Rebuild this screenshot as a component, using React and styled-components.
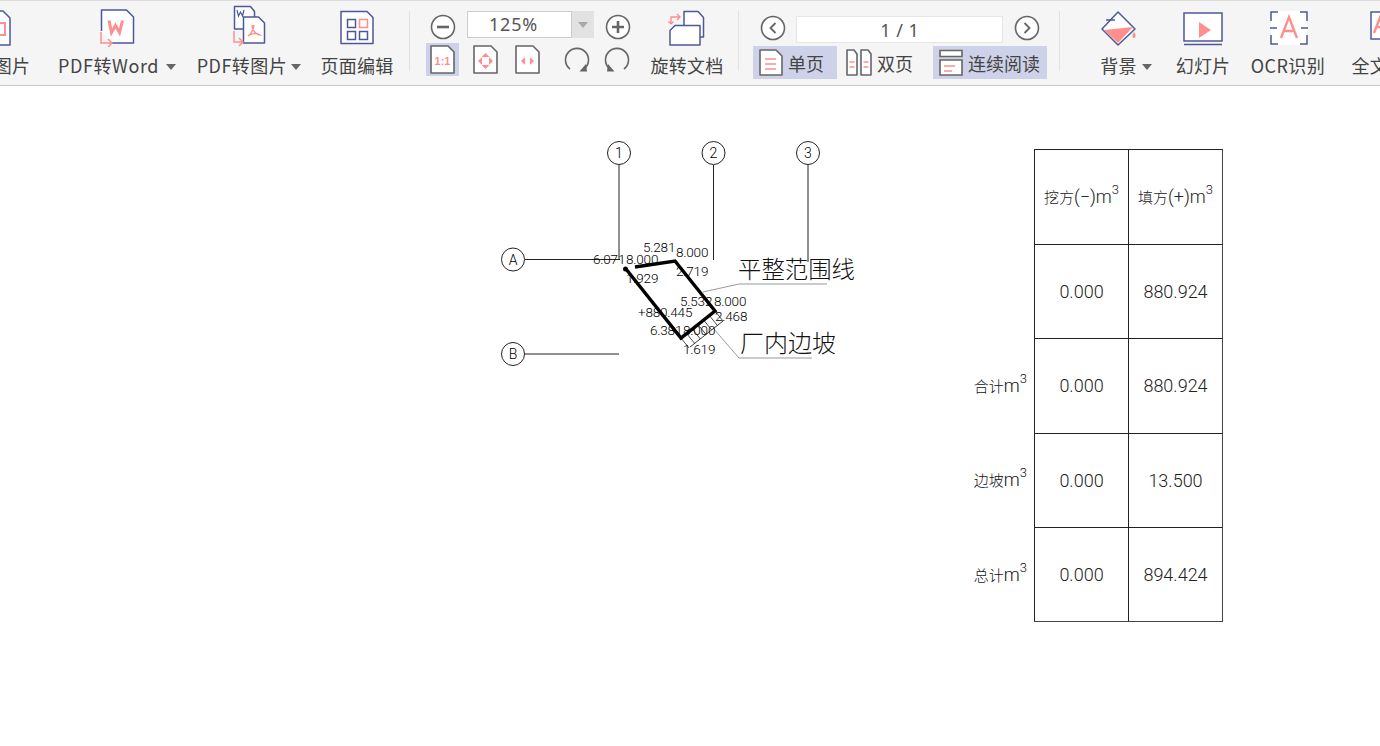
import React from "react";
import styled, { createGlobalStyle } from "styled-components";

const NAVY = "#4d5799";
const PINK = "#ff8f8f";
const GREY = "#666";
const UI_FONT = '"Noto Sans CJK SC", "Noto Sans", sans-serif';
const CAD_FONT = 'Roboto, "Liberation Sans", sans-serif';

const GlobalStyle = createGlobalStyle`
  html, body { margin: 0; padding: 0; background: #fff; overflow: hidden; }
  body { font-family: ${UI_FONT}; }
`;

const Page = styled.div`
  width: 1380px;
  height: 746px;
  overflow: hidden;
  display: flex;
  flex-direction: column;
`;

const Toolbar = styled.div`
  height: 85px;
  flex: none;
  box-sizing: border-box;
  display: flex;
  align-items: flex-start;
  margin-left: -24px;
  background: #f5f5f5;
  border-top: 1px solid #dcdcdc;
  overflow: hidden;
`;

const Tool = styled.div`
  width: ${p => p.$w}px;
  margin-left: ${p => p.$ml || 0}px;
  flex: none;
  display: flex;
  flex-direction: column;
  align-items: center;
  padding-top: 2px;
`;

const Label = styled.div`
  margin-top: 6px;
  height: 24px;
  line-height: 24px;
  font-size: 18px;
  letter-spacing: ${p => p.$track || 0.2}px;
  color: #444;
  white-space: nowrap;
  display: flex;
  align-items: center;
`;

const Caret = styled.span`
  width: 0;
  height: 0;
  margin-left: ${p => p.$gap || 7}px;
  margin-top: 3px;
  border-left: 5px solid transparent;
  border-right: 5px solid transparent;
  border-top: 6px solid #666;
`;

const Divider = styled.div`
  width: 1px;
  height: 60px;
  flex: none;
  margin: 10px ${p => p.$right}px 0 ${p => p.$left}px;
  background: #e2e2e2;
`;

const Group = styled.div`
  width: ${p => p.$w}px;
  flex: none;
  display: flex;
  flex-direction: column;
`;

const ZoomTop = styled.div`
  display: flex;
  align-items: center;
  height: 27px;
  margin-top: 10px;
  padding-left: 4px;
`;

const ZoomBottom = styled.div`
  display: flex;
  align-items: center;
  margin-top: 5px;
`;

const RoundIcon = styled.svg`
  width: 26px;
  height: 26px;
  flex: none;
  margin-left: ${p => p.$ml || 0}px;
  margin-top: ${p => p.$down || 0}px;
  margin-bottom: ${p => p.$up || 0}px;
  transform: ${p => (p.$flip ? "scaleX(-1)" : "none")};
`;

const ZoomField = styled.div`
  width: 105px;
  height: 27px;
  margin-left: 11px;
  padding-right: 12px;
  box-sizing: border-box;
  background: #fff;
  border: 1px solid #ccc;
  font-family: "Noto Sans", sans-serif;
  font-size: 18px;
  line-height: 25px;
  letter-spacing: 0.8px;
  text-align: center;
  color: #555;
`;

const ZoomDrop = styled.div`
  width: 22px;
  height: 27px;
  flex: none;
  display: flex;
  align-items: center;
  justify-content: center;
  background: #e2e2e2;
`;

const DropCaret = styled.span`
  width: 0;
  height: 0;
  border-left: 5px solid transparent;
  border-right: 5px solid transparent;
  border-top: 6px solid #a8a8a8;
`;

const FitButton = styled.div`
  width: 33px;
  height: 33px;
  flex: none;
  margin-left: ${p => p.$ml || 0}px;
  display: flex;
  align-items: center;
  justify-content: center;
  background: ${p => (p.$active ? "#ced2e8" : "transparent")};
`;

const NavTop = styled.div`
  display: flex;
  align-items: center;
  height: 27px;
  margin-top: 15px;
  padding-left: 7px;
`;

const PageField = styled.div`
  width: 207px;
  height: 27px;
  margin-left: 10px;
  box-sizing: border-box;
  background: #fff;
  border: 1px solid #e6e6e6;
  font-family: "Noto Sans", sans-serif;
  font-size: 18px;
  line-height: 26px;
  text-align: center;
  word-spacing: 1px;
  color: #555;
`;

const NavBottom = styled.div`
  display: flex;
  margin-top: 3px;
`;

const ViewButton = styled.div`
  width: ${p => p.$w}px;
  height: 33px;
  flex: none;
  margin-left: ${p => p.$ml || 0}px;
  display: flex;
  align-items: center;
  padding-left: ${p => (p.$tight ? 1 : 6)}px;
  box-sizing: border-box;
  gap: 5px;
  font-size: 18px;
  color: #444;
  white-space: nowrap;
  background: ${p => (p.$active ? "#ced2e8" : "transparent")};
`;

const Sheet = styled.div`
  flex: 1;
  display: flex;
  align-items: flex-start;
  background: #fff;
  border-top: 1px solid #c8c8c8;
`;

const Drawing = styled.svg`
  width: 380px;
  height: 300px;
  flex: none;
  margin: 49px 0 0 495px;
`;

const Dim = styled.text`
  font-family: ${CAD_FONT};
  font-size: 13.5px;
  letter-spacing: -0.2px;
  font-weight: 300;
  fill: #000;
`;

const Bubble = styled.text`
  font-family: ${CAD_FONT};
  font-size: 14px;
  font-weight: 300;
  fill: #000;
  text-anchor: middle;
`;

const Callout = styled.text`
  font-family: "Noto Sans CJK SC", sans-serif;
  font-size: ${p => p.$size}px;
  font-weight: 300;
  fill: #111;
`;

const Takeoff = styled.div`
  margin: 63px 0 0 100px;
  display: grid;
  grid-template-columns: 59px 94px 95px;
  grid-template-rows: repeat(5, 94.5px);
`;

const RowName = styled.div`
  display: flex;
  align-items: center;
  justify-content: flex-end;
  padding-right: 7px;
  font-family: "Noto Sans CJK SC", sans-serif;
  font-weight: 300;
  font-size: 15px;
  color: #111;
  white-space: nowrap;
`;

const Cell = styled.div`
  display: flex;
  align-items: center;
  justify-content: center;
  box-sizing: border-box;
  border-top: 1px solid #222;
  border-left: 1px solid #222;
  border-right: ${p => (p.$end ? "1px solid #444" : "none")};
  border-bottom: ${p => (p.$last ? "1px solid #444" : "none")};
  font-family: ${p => (p.$head ? '"Noto Sans CJK SC", sans-serif' : CAD_FONT)};
  font-size: ${p => (p.$head ? 15 : 18)}px;
  font-weight: 300;
  color: #222;
  white-space: nowrap;
`;

const Cube = styled.sup`
  font-size: 13px;
  line-height: 0;
  vertical-align: 9px;
`;

const Metric = styled.span`
  font-family: ${CAD_FONT};
  font-weight: 300;
  font-size: 18px;
`;

const Unit = () => <Metric>m<Cube>3</Cube></Metric>;

// 所有图标都按截图上的屏幕坐标画，viewBox 取工具中心左右各 30
const ToolIcon = ({ cx, children }) => (
  <svg width="60" height="44" viewBox={`${cx - 30} 4 60 44`} fill="none">
    {children}
  </svg>
);

const Sheetlet = ({ d, stroke = NAVY }) => (
  <path d={d} fill="#fff" stroke={stroke} strokeWidth="1.5" strokeLinejoin="round" />
);

const BackArrow = ({ x, y, to }) => (
  <path d={`M${x} ${y}v11h${to - x}m-4 -4l4 4l-4 4`} stroke={PINK} strokeWidth="1.5" />
);

const CirclePlain = ({ children, ml, down, up }) => (
  <RoundIcon viewBox="0 0 26 26" fill="none" $ml={ml} $down={down} $up={up}>
    <circle cx="13" cy="13" r="11.5" fill="#fff" stroke={GREY} strokeWidth="1.6" />
    {children}
  </RoundIcon>
);

const MiniPage = ({ children }) => (
  <svg width="25" height="29" viewBox="0 0 25 29" fill="none">
    <path d="M1 1h17l6 6v21H1z" fill="#fff" stroke={GREY} strokeWidth="1.6" strokeLinejoin="round" />
    {children}
  </svg>
);

const Spin = ({ flip, ml }) => (
  <RoundIcon viewBox="0 0 26 26" fill="none" $ml={ml} $flip={flip}>
    <path d="M6 22A11.5 11.5 0 1 1 20 22" stroke={GREY} strokeWidth="1.6" />
    <path d="M15.500 24.500h7.500l-1-7.500z" fill={GREY} />
  </RoundIcon>
);

const SinglePageIcon = () => (
  <svg width="24" height="27" viewBox="0 0 24 27" fill="none">
    <path d="M1 1h16l6 6v19H1z" fill="#fff" stroke={GREY} strokeWidth="1.6" strokeLinejoin="round" />
    <path d="M6 10h11M6 15h11M6 20h11" stroke={PINK} strokeWidth="1.6" />
  </svg>
);

const TwoPageIcon = () => (
  <svg width="26" height="27" viewBox="0 0 26 27" fill="none">
    <path d="M1 1h7l3 4v21H1zM15 1h7l3 4v21H15z" fill="#fff" stroke={GREY} strokeWidth="1.6" strokeLinejoin="round" />
    <path d="M3.500 13h5M3.500 18h5M17.500 13h5M17.500 18h5" stroke={PINK} strokeWidth="1.6" />
  </svg>
);

const ScrollIcon = () => (
  <svg width="24" height="27" viewBox="0 0 24 27" fill="none">
    <path d="M1 1.500h22v6H1z" fill="#fff" stroke={GREY} strokeWidth="1.6" />
    <path d="M1 11h22v15H1z" fill="#fff" stroke={GREY} strokeWidth="1.6" />
    <path d="M5 17h11M5 22h8" stroke={PINK} strokeWidth="1.6" />
  </svg>
);

const BUBBLES = [
  { cx: 619, cy: 153, t: "1" },
  { cx: 713.5, cy: 153, t: "2" },
  { cx: 808, cy: 153, t: "3" },
  { cx: 513, cy: 259.5, t: "A" },
  { cx: 513, cy: 354, t: "B" },
];

const DIMS = [
  { x: 593, y: 264, t: "6.071" },
  { x: 626, y: 264, t: "8.000" },
  { x: 643, y: 252, t: "5.281" },
  { x: 676, y: 257, t: "8.000" },
  { x: 676, y: 276, t: "2.719" },
  { x: 626, y: 283, t: "1.929" },
  { x: 680, y: 306, t: "5.532" },
  { x: 714, y: 306, t: "8.000" },
  { x: 638, y: 317, t: "+880.445" },
  { x: 715, y: 321, t: "2.468" },
  { x: 650, y: 335, t: "6.381" },
  { x: 683, y: 335, t: "8.000" },
  { x: 683, y: 354, t: "1.619" },
];

// 边坡示坡线：沿右下边每隔一段画一根
const HATCH = [0, 1, 2, 3, 4, 5, 6].map(i => {
  const x = 681 + i * 5.67;
  const y = 338 - i * 4.5;
  return `M${x} ${y}l8 10`;
});

const ROWS = [
  { name: "", cut: "0.000", fill: "880.924" },
  { name: "合计", cut: "0.000", fill: "880.924" },
  { name: "边坡", cut: "0.000", fill: "13.500" },
  { name: "总计", cut: "0.000", fill: "894.424" },
];

export default function App() {
  return (
    <Page>
      <GlobalStyle />
      <Toolbar>
        <Tool $w={72}>
          <ToolIcon cx={12}>
            <Sheetlet d="M-30 12h33l7 7v27h-40z" />
            <path d="M-8 24h13v12H-8z" fill="#fff" stroke={PINK} strokeWidth="2" />
          </ToolIcon>
          <Label>图片</Label>
        </Tool>
        <Tool $w={138}>
          <ToolIcon cx={117}>
            <Sheetlet d="M101.500 32V11h25l7 7v26h-23" />
            <BackArrow x={101} y={33} to={112} />
            <path d="M109 21.500l2.500 12 4-7 4 7 3-12" stroke={PINK} strokeWidth="3" />
          </ToolIcon>
          <Label $track={0.6}>PDF转Word<Caret /></Label>
        </Tool>
        <Tool $w={126}>
          <ToolIcon cx={249}>
            <Sheetlet d="M234.500 30V7.500h16l4 5V30z" />
            <path d="M237 11l1.500 6 2-4 2 4 1.500-6" stroke={NAVY} strokeWidth="1.200" />
            <Sheetlet d="M243.500 44V18h15l6 6v20z" />
            <BackArrow x={234} y={32} to={243} />
            <path d="M254 26c-1 6-3 9-6 11c3-3 9-3 12-1c-3 0-8-4-8-10" stroke={PINK} strokeWidth="1.500" />
          </ToolIcon>
          <Label $track={0.5}>PDF转图片<Caret $gap={4} /></Label>
        </Tool>
        <Tool $w={90}>
          <ToolIcon cx={357}>
            <Sheetlet d="M341 12.500h26l6 6v26h-32z" />
            <path d="M347.500 20.500h8v8h-8zM347.500 32.500h8v8h-8zM359.500 32.500h8v8h-8z" stroke={NAVY} strokeWidth="1.500" />
            <path d="M359.500 20.500h8v8h-8z" stroke={PINK} strokeWidth="1.500" />
          </ToolIcon>
          <Label>页面编辑</Label>
        </Tool>
        <Divider $left={7} $right={16} />
        <Group $w={214}>
          <ZoomTop>
            <CirclePlain down={5}><path d="M7 13h12" stroke={GREY} strokeWidth="2.600" /></CirclePlain>
            <ZoomField>125%</ZoomField>
            <ZoomDrop><DropCaret /></ZoomDrop>
            <CirclePlain ml={11} down={5}><path d="M7 13h12M13 7v12" stroke={GREY} strokeWidth="2.600" /></CirclePlain>
          </ZoomTop>
          <ZoomBottom>
            <FitButton $active>
              <MiniPage>
                <text x="12.500" y="20" textAnchor="middle" fontFamily="Liberation Sans, sans-serif" fontWeight="700" fontSize="11" fill={PINK}>1:1</text>
              </MiniPage>
            </FitButton>
            <FitButton $ml={10}>
              <MiniPage>
                <path d="M12.500 8l4 4h-8zM12.500 24l4-4h-8zM5 16l4-4v8zM20 16l-4-4v8z" fill={PINK} />
              </MiniPage>
            </FitButton>
            <FitButton $ml={9}>
              <MiniPage>
                <path d="M6 16l4-4v8zM19 16l-4-4v8z" fill={PINK} />
              </MiniPage>
            </FitButton>
            <Spin ml={20} />
            <Spin flip ml={14} />
          </ZoomBottom>
        </Group>
        <Tool $w={94}>
          <ToolIcon cx={687}>
            <Sheetlet d="M684 12.500h14l5.500 6V38H684z" />
            <Sheetlet d="M675 26.500h25V46h-30V31.500z" />
            <path d="M671 25v-7h9m-3-3l3 3l-3 3M671 25l-2.500-2.500M671 25l2.500-2.500" stroke={PINK} strokeWidth="1.400" />
          </ToolIcon>
          <Label>旋转文档</Label>
        </Tool>
        <Divider $left={4} $right={14} />
        <Group $w={294}>
          <NavTop>
            <CirclePlain up={4}><path d="M15.500 8l-5 5l5 5" stroke={GREY} strokeWidth="1.800" /></CirclePlain>
            <PageField>1 / 1</PageField>
            <CirclePlain ml={11} up={4}><path d="M10.500 8l5 5l-5 5" stroke={GREY} strokeWidth="1.800" /></CirclePlain>
          </NavTop>
          <NavBottom>
            <ViewButton $w={84} $active><SinglePageIcon />单页</ViewButton>
            <ViewButton $w={80} $ml={8} $tight><TwoPageIcon />双页</ViewButton>
            <ViewButton $w={114} $ml={8} $active><ScrollIcon />连续阅读</ViewButton>
          </NavBottom>
        </Group>
        <Divider $left={12} $right={16} />
        <Tool $w={100}>
          <ToolIcon cx={1126}>
            <path d="M1118 13l17 17l-17 16l-16-16z" fill="#fff" stroke={NAVY} strokeWidth="1.500" strokeLinejoin="round" />
            <path d="M1104 31l29-3l-15 16z" fill={PINK} />
            <path d="M1106 21h9" stroke={NAVY} strokeWidth="1.500" />
            <path d="M1134 33c-3 4-1 6 0 6s3-2 0-6z" fill={PINK} />
          </ToolIcon>
          <Label>背景<Caret $gap={5} /></Label>
        </Tool>
        <Tool $w={54}>
          <ToolIcon cx={1203}>
            <path d="M1184 14h38v28h-38z" fill="#fff" stroke={NAVY} strokeWidth="1.500" />
            <path d="M1184 45.500h38" stroke={NAVY} strokeWidth="1.500" />
            <path d="M1199 23l12 8l-12 8z" fill={PINK} />
          </ToolIcon>
          <Label>幻灯片</Label>
        </Tool>
        <Tool $w={74} $ml={21}>
          <ToolIcon cx={1288}>
            <path d="M1271 12h36v34h-36z" fill="#fff" />
            <path d="M1278 13h-7v9M1300 13h7v9M1278 45h-7v-9M1300 45h7v-9M1270 29h7M1301 29h7" stroke={NAVY} strokeWidth="1.500" />
            <path d="M1281 39l8-21l8 21M1284 32h10" stroke={PINK} strokeWidth="2.400" />
          </ToolIcon>
          <Label $track={0.4}>OCR识别</Label>
        </Tool>
        <Tool $w={72} $ml={27}>
          <ToolIcon cx={1388}>
            <path d="M1371 13h30v27h-30z" fill="#fff" stroke={NAVY} strokeWidth="1.500" />
            <path d="M1374 34l7-18l7 18M1377 28h8" stroke={PINK} strokeWidth="2.400" />
          </ToolIcon>
          <Label>全文翻译</Label>
        </Tool>
      </Toolbar>
      <Sheet>
        <Drawing viewBox="495 135 380 300" fill="none">
          <g stroke="#222" strokeWidth="1">
            <path d="M619 165v95M713.500 165v95M808 165v97M525 259.500h95M525 354h94" />
            <path d="M703 292l36-8h88M713 328l26 30h73" stroke="#999" />
            <path d="M690 347l33-26" strokeWidth="0.900" />
            <path d={HATCH.join("")} strokeWidth="0.800" />
          </g>
          {BUBBLES.map(b => (
            <g key={b.t}>
              <circle cx={b.cx} cy={b.cy} r="11.500" fill="#fff" stroke="#222" />
              <Bubble x={b.cx} y={b.cy + 5}>{b.t}</Bubble>
            </g>
          ))}
          <path d="M635 267l40-6l40 50l-34 27l-55-69" stroke="#000" strokeWidth="3.400" />
          <circle cx="625.500" cy="269" r="2.500" fill="#000" />
          {DIMS.map(d => (
            <Dim key={`${d.x}-${d.y}`} x={d.x} y={d.y}>{d.t}</Dim>
          ))}
          <Callout x="738" y="278" $size={23.4}>平整范围线</Callout>
          <Callout x="740" y="352" $size={24}>厂内边坡</Callout>
        </Drawing>
        <Takeoff>
          <RowName />
          <Cell $head><span>挖方<Metric>(−)</Metric><Unit /></span></Cell>
          <Cell $head $end><span>填方<Metric>(+)</Metric><Unit /></span></Cell>
          {ROWS.map((r, i) => (
            <React.Fragment key={i}>
              <RowName>
                {r.name && <span>{r.name}<Unit /></span>}
              </RowName>
              <Cell $last={i === ROWS.length - 1}>{r.cut}</Cell>
              <Cell $end $last={i === ROWS.length - 1}>{r.fill}</Cell>
            </React.Fragment>
          ))}
        </Takeoff>
      </Sheet>
    </Page>
  );
}
